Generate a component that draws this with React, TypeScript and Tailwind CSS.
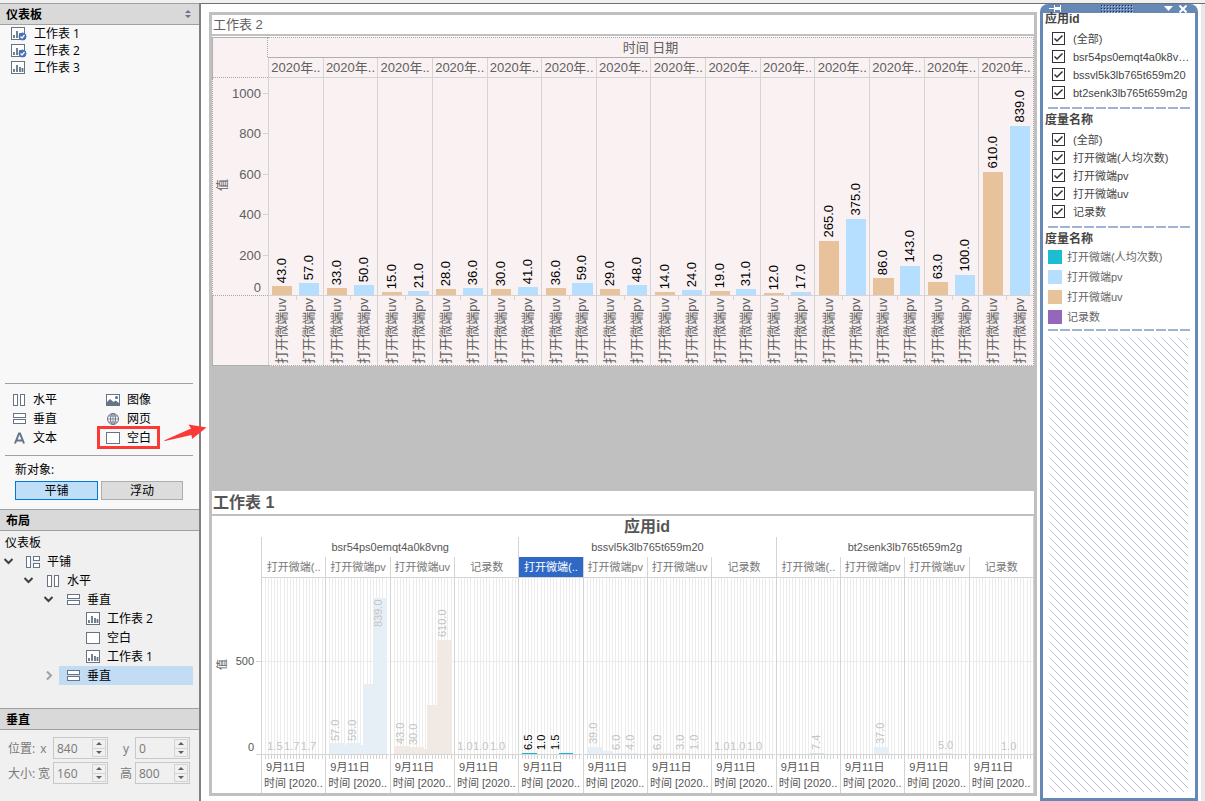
import React from 'react'
import { twMerge } from 'tailwind-merge'

type IconName = 'sheet' | 'sheetUsed' | 'horizontal' | 'vertical' | 'tiled' | 'image' | 'web' | 'text' | 'blank'

const Icon: React.FC<{ name: IconName }> = ({ name }) => (
    <svg width="16" height="14" viewBox="0 0 16 14" fill="none" stroke="#667486" className="shrink-0 overflow-visible" aria-hidden="true">
        {(name === 'sheet' || name === 'sheetUsed') && (
            <>
                <rect x="0.5" y="0.5" width="13" height="12" fill="#fff" />
                <path d="M3 11V8M6 11V4M9 11V6M11.500 11V7" strokeWidth="1.8" />
            </>
        )}
        {name === 'sheetUsed' && (
            <>
                <circle cx="11.500" cy="9.500" r="3.500" fill="#4472b8" stroke="#4472b8" />
                <path d="M9.500 9.500L11 11L13.500 8" stroke="#fff" strokeWidth="1.2" />
            </>
        )}
        {name === 'horizontal' && (
            <>
                <rect x="1.500" y="1.500" width="4" height="11" fill="#fff" />
                <rect x="8.500" y="1.500" width="4" height="11" fill="#fff" />
            </>
        )}
        {name === 'vertical' && (
            <>
                <rect x="1.500" y="1.500" width="12" height="4" fill="#fff" />
                <rect x="1.500" y="7.500" width="12" height="4" fill="#fff" />
            </>
        )}
        {name === 'tiled' && (
            <>
                <rect x="0.500" y="1.500" width="4" height="11" fill="#fff" />
                <rect x="7.500" y="1.500" width="6" height="4" fill="#fff" />
                <rect x="7.500" y="8.500" width="6" height="4" fill="#fff" />
            </>
        )}
        {name === 'image' && (
            <>
                <rect x="0.500" y="1.500" width="13" height="11" fill="#fff" />
                <path d="M1 12.500V9L4 6L7.500 9L9.500 7.500L13 10V12.500Z" fill="#667486" stroke="none" />
                <circle cx="10.500" cy="4.500" r="1.500" fill="#4472b8" stroke="none" />
            </>
        )}
        {name === 'web' && (
            <>
                <circle cx="7" cy="7" r="5.500" fill="#fff" />
                <ellipse cx="7" cy="7" rx="2.500" ry="5.500" />
                <path d="M1.500 7H12.500M2.500 4H11.500M2.500 10H11.500M7 1.500V12.500" strokeWidth="0.8" />
            </>
        )}
        {name === 'text' && <path d="M3 12.500L7 2.500H8L12 12.500M4.500 9.500H10.500" strokeWidth="2" />}
        {name === 'blank' && <rect x="0.500" y="1.500" width="13" height="11" fill="#fff" />}
    </svg>
)

const PanelHeader: React.FC<{ title: string; children?: React.ReactNode }> = ({ title, children }) => (
    <h2 className="flex h-[22px] shrink-0 items-center justify-between border-y border-[#a0a0a0] bg-[#d9d9d9] pr-2 pl-1.5 font-bold">
        {title}
        {children}
    </h2>
)

const worksheets: { label: string; icon: IconName }[] = [
    { label: '工作表 1', icon: 'sheetUsed' },
    { label: '工作表 2', icon: 'sheetUsed' },
    { label: '工作表 3', icon: 'sheet' },
]

const objects: { label: string; icon: IconName; marked?: boolean }[] = [
    { label: '水平', icon: 'horizontal' },
    { label: '图像', icon: 'image' },
    { label: '垂直', icon: 'vertical' },
    { label: '网页', icon: 'web' },
    { label: '文本', icon: 'text' },
    { label: '空白', icon: 'blank', marked: true },
]

const indents = ['pl-[3px]', 'pl-[23px]', 'pl-[43px]', 'pl-[63px]']

const tree: { label: string; icon: IconName; level: number; state?: 'open' | 'closed'; selected?: boolean }[] = [
    { label: '平铺', icon: 'tiled', level: 0, state: 'open' },
    { label: '水平', icon: 'horizontal', level: 1, state: 'open' },
    { label: '垂直', icon: 'vertical', level: 2, state: 'open' },
    { label: '工作表 2', icon: 'sheet', level: 3 },
    { label: '空白', icon: 'blank', level: 3 },
    { label: '工作表 1', icon: 'sheet', level: 3 },
    { label: '垂直', icon: 'vertical', level: 2, state: 'closed', selected: true },
]

const NumberField: React.FC<{ id: string; value: string }> = ({ id, value }) => (
    <div className="flex h-[22px] border border-[#c8c8c8] bg-[#f0f0f0]">
        <input id={id} defaultValue={value} className="w-0 min-w-0 flex-1 bg-transparent pl-[3px] outline-none" />
        <div className="m-px flex w-[14px] flex-col border border-[#d4d4d4]">
            <button type="button" aria-label="增加" className="flex flex-1 items-center justify-center border-b border-[#d4d4d4]">
                <svg width="6" height="3" viewBox="0 0 6 3"><path d="M0 3L3 0L6 3Z" fill="#606060" /></svg>
            </button>
            <button type="button" aria-label="减少" className="flex flex-1 items-center justify-center">
                <svg width="6" height="3" viewBox="0 0 6 3"><path d="M0 0L3 3L6 0Z" fill="#606060" /></svg>
            </button>
        </div>
    </div>
)

const Sidebar: React.FC = () => (
    <aside className="flex w-[201px] shrink-0 flex-col border-r-2 border-[#808080] bg-[#f8f8f8] font-['Open_Sans','Noto_Sans_CJK_SC',sans-serif] text-[12px] leading-[17px] text-black">
        <PanelHeader title="仪表板">
            <svg width="6" height="8" viewBox="0 0 6 8" fill="#667486"><path d="M0 3L3 0L6 3ZM0 5L3 8L6 5Z" /></svg>
        </PanelHeader>
        <ul className="flex-1">
            {worksheets.map((w) => (
                <li key={w.label} className="flex h-[17px] items-center gap-[7px] pl-[11px]">
                    <Icon name={w.icon} />
                    {w.label}
                </li>
            ))}
        </ul>

        <div className="mr-1.5 ml-[5px] border-y border-[#a0a0a0] pt-1.5 pb-2">
            <div className="grid grid-cols-[94px_1fr]">
                {objects.map((o) => (
                    <div key={o.label} className="relative flex">
                        <button type="button" className="flex h-[19px] items-center gap-[5px] pl-[7px]">
                            <Icon name={o.icon} />
                            {o.label}
                        </button>
                        {o.marked && (
                            <>
                                <span className="pointer-events-none absolute -top-0.5 -left-0.5 h-[23px] w-[63px] border-3 border-[#fb3936]" />
                                <svg className="pointer-events-none absolute -top-1.5 left-[65px] z-10" width="44" height="20" viewBox="0 0 44 20" fill="#fb3936">
                                    <path d="M0 18.500L27 6.500L24.500 2.500L42.500 5.500L28 17L27.500 13L1 19Z" />
                                </svg>
                            </>
                        )}
                    </div>
                ))}
            </div>
        </div>

        <div className="px-[15px] pt-[5px] pb-[9px]">
            <div className="mb-[3px]">新对象:</div>
            <div className="flex gap-[3px]">
                <button type="button" className="h-[19px] w-[83px] border border-[#0078d7] bg-[#bfdef7] leading-[17px]">平铺</button>
                <button type="button" className="h-[19px] w-[82px] border border-[#adadad] bg-[#dcdcdc] leading-[17px]">浮动</button>
            </div>
        </div>

        <PanelHeader title="布局" />
        <div className="h-[177px] bg-[#f0f0f0] pt-0.5 leading-[19px]">
            <div className="pl-[5px]">仪表板</div>
            <ul>
                {tree.map((t, i) => (
                    <li key={i} className={twMerge('mr-1.5 flex h-[19px] items-center', indents[t.level])}>
                        <span className="flex w-4 shrink-0 items-center">
                            {t.state === 'open' && (
                                <svg width="11" height="7" viewBox="0 0 11 7" fill="none" stroke="#404040" strokeWidth="2"><path d="M1.500 1L5.500 5L9.500 1" /></svg>
                            )}
                            {t.state === 'closed' && (
                                <svg width="11" height="9" viewBox="0 0 11 9" fill="none" stroke="#a0a0a0" strokeWidth="2"><path d="M4 0.500L8 4.500L4 8.500" /></svg>
                            )}
                        </span>
                        <span className={twMerge('flex h-full flex-1 items-center gap-[5px] pl-[7px]', t.selected && 'bg-[#c2dcf3]')}>
                            <Icon name={t.icon} />
                            {t.label}
                        </span>
                    </li>
                ))}
            </ul>
        </div>

        <PanelHeader title="垂直" />
        <div className="grid grid-cols-[30px_15px_55px_27px_55px] items-center gap-y-[3px] bg-[#f0f0f0] pt-[7px] pb-[17px] pl-2 text-[#787878]">
            <span>位置:</span>
            <label htmlFor="pos-x" className="pr-1 text-center">x</label>
            <NumberField id="pos-x" value="840" />
            <label htmlFor="pos-y" className="ml-3 w-3 text-center">y</label>
            <NumberField id="pos-y" value="0" />
            <span>大小:</span>
            <label htmlFor="size-w">宽</label>
            <NumberField id="size-w" value="160" />
            <label htmlFor="size-h" className="ml-3">高</label>
            <NumberField id="size-h" value="800" />
        </div>
    </aside>
)

// [uv, pv] for each day
const daily = [
    [43, 57], [33, 50], [15, 21], [28, 36], [30, 41], [36, 59], [29, 48],
    [14, 24], [19, 31], [12, 17], [265, 375], [86, 143], [63, 100], [610, 839],
]

const SheetTwo: React.FC = () => (
    <section className="text-[13px] text-[#606060]">
        <h3 className="h-[19px] bg-white pl-px leading-[19px]">工作表 2</h3>
        <div className="mt-0.5 flex border-t border-white bg-[#f9f1f2]">
            <div className="w-14 shrink-0">
                <div className="flex h-[41px] border-b border-dotted border-[#a8a8a8]">
                    <div className="flex-1 border-t border-l border-solid border-[#b0b0b0]" />
                    <div className="h-5 border-r border-dotted border-[#a8a8a8]" />
                </div>
                <svg width="56" height="218" className="block border-b border-l border-dotted border-[#a8a8a8]" fill="#606060">
                    {[1000, 800, 600, 400, 200].map((v) => (
                        <g key={v}>
                            <text x="48" y={222 - v * 0.202} textAnchor="end">{v}</text>
                            <path d={`M50 ${Math.round(217 - v * 0.202)}.5H56`} stroke="#d4d4d4" />
                        </g>
                    ))}
                    <text x="48" y="214" textAnchor="end">0</text>
                    <text transform="translate(14 113) rotate(-90)" fontSize="12">值</text>
                </svg>
                <div className="h-[70px] border-b border-l border-[#b0b0b0]" />
            </div>
            <div className="min-w-0 flex-1 border-t border-r border-b border-dotted border-[#a8a8a8]">
                <div className="h-5 border-b border-[#b0b0b0] text-center leading-[19px] [border-bottom-style:solid]">时间 日期</div>
                <div className="grid grid-cols-14">
                    {daily.map((pair, d) => (
                        <div key={d} className="min-w-0 border-l border-solid border-[#d4d4d4]">
                            <div className="h-5 overflow-hidden border-b border-solid border-[#d4d4d4] text-center leading-[19px] whitespace-nowrap">2020年..</div>
                            <div className="flex h-[218px] border-b border-solid border-[#d4d4d4]">
                                {pair.map((v, i) => (
                                    <div key={i} className="flex flex-1 flex-col items-center justify-end">
                                        <span className="mb-[3px] rotate-180 leading-[18px] text-black [text-orientation:sideways] [writing-mode:vertical-rl]">{v.toFixed(1)}</span>
                                        <div className={twMerge('w-3/4', i === 0 ? 'bg-[#e8c29a]' : 'bg-[#b5deff]')} style={{ height: Math.round(v * 0.202) }} />
                                    </div>
                                ))}
                            </div>
                            <div className="flex h-[69px]">
                                {['uv', 'pv'].map((m, i) => (
                                    <div key={m} className="relative flex flex-1 items-start justify-center overflow-hidden pt-0.5">
                                        {i === 1 && <span className="absolute top-0 left-0 h-1 w-px bg-[#d4d4d4]" />}
                                        <span className="rotate-180 leading-[18px] whitespace-nowrap [text-orientation:sideways] [writing-mode:vertical-rl]">打开微端{m}</span>
                                    </div>
                                ))}
                            </div>
                        </div>
                    ))}
                </div>
            </div>
        </div>
    </section>
)

interface Pane {
    name: string
    fill: string
    bars: number[][] // x, width, height
    labels: [string, number, number][] // text, x, distance of the baseline from the axis
    flat?: boolean
    active?: boolean
}

const PANE_WIDTH = 64
const PLOT_HEIGHT = 177

const groups: { id: string; panes: Pane[] }[] = [
    {
        id: 'bsr54ps0emqt4a0k8vng',
        panes: [
            { name: '打开微端(..', fill: '#d8ecee', bars: [], flat: true, labels: [['1.5', 13, 5], ['1.7', 30, 5], ['1.7', 47, 5]] },
            {
                name: '打开微端pv', fill: '#e7eff6',
                bars: [[3, 15, 11], [18, 2, 9], [20, 15, 11], [35, 2, 9], [37, 10, 70], [47, 15, 156]],
                labels: [['57.0', 9, 14], ['59.0', 26, 14], ['839.0', 53, 128]],
            },
            {
                name: '打开微端uv', fill: '#f1eae4',
                bars: [[3, 15, 8], [18, 15, 7], [33, 3, 5], [36, 10, 49], [46, 15, 114]],
                labels: [['43.0', 9, 11], ['30.0', 22, 10], ['610.0', 52, 118]],
            },
            { name: '记录数', fill: '#eee', bars: [], flat: true, labels: [['1.0', 10, 5], ['1.0', 26, 5], ['1.0', 43, 5]] },
        ],
    },
    {
        id: 'bssvl5k3lb765t659m20',
        panes: [
            { name: '打开微端(..', fill: '#1bb5cb', active: true, bars: [[3, 15, 1], [40, 15, 1]], labels: [['6.5', 9, 5], ['1.0', 22, 5], ['1.5', 36, 5]] },
            { name: '打开微端pv', fill: '#e7eff6', bars: [[3, 15, 7], [18, 10, 3], [28, 27, 1]], labels: [['39.0', 9, 11], ['6.0', 32, 5], ['4.0', 46, 5]] },
            { name: '打开微端uv', fill: '#f1eae4', bars: [[3, 38, 1]], labels: [['6.0', 9, 5], ['3.0', 32, 5], ['1.0', 46, 5]] },
            { name: '记录数', fill: '#eee', bars: [], flat: true, labels: [['1.0', 10, 5], ['1.0', 26, 5], ['1.0', 43, 5]] },
        ],
    },
    {
        id: 'bt2senk3lb765t659m2g',
        panes: [
            { name: '打开微端(..', fill: '#cfe6e8', bars: [[33, 14, 1]], labels: [['7.4', 39, 5]] },
            { name: '打开微端pv', fill: '#e7eff6', bars: [[33, 15, 7], [48, 2, 1]], labels: [['37.0', 39, 11]] },
            { name: '打开微端uv', fill: '#f1eae4', bars: [[34, 15, 1]], flat: true, labels: [['5.0', 41, 6]] },
            { name: '记录数', fill: '#eee', bars: [], flat: true, labels: [['1.0', 39, 5]] },
        ],
    },
]

const pct = (x: number) => `${(x / PANE_WIDTH) * 100}%`

const PanePlot: React.FC<{ pane: Pane }> = ({ pane }) => (
    <svg width="100%" height={PLOT_HEIGHT + 4} className="block">
        <g stroke="#ececec" shapeRendering="crispEdges">
            {Array.from({ length: 19 }, (_, i) => (
                <React.Fragment key={i}>
                    <line x1={`${(i + 1) * 5}%`} x2={`${(i + 1) * 5}%`} y1="0" y2={PLOT_HEIGHT} />
                    <line x1={`${(i + 1) * 5}%`} x2={`${(i + 1) * 5}%`} y1={PLOT_HEIGHT} y2={PLOT_HEIGHT + 4} stroke="#d4d4d4" />
                </React.Fragment>
            ))}
            <line x1="0" x2="100%" y1="83" y2="83" />
        </g>
        {pane.bars.map(([x, w, h]) => (
            <rect key={x} x={pct(x)} width={pct(w)} y={PLOT_HEIGHT - 1 - h} height={h} fill={pane.fill} shapeRendering="crispEdges" />
        ))}
        <line x1="0" x2="100%" y1={PLOT_HEIGHT - 1} y2={PLOT_HEIGHT - 1} stroke="#d4d4d4" shapeRendering="crispEdges" />
        {pane.labels.map(([text, x, up]) => (
            <svg key={x} x={pct(x)} y={PLOT_HEIGHT - up} overflow="visible" fontSize="11" fill={pane.active ? '#000' : '#c4c4c4'}>
                {pane.flat ? <text textAnchor="middle">{text}</text> : <text transform="translate(4 0) rotate(-90)">{text}</text>}
            </svg>
        ))}
    </svg>
)

const SheetOne: React.FC = () => (
    <section className="text-[11px] text-[#555]">
        <h3 className="h-[23px] bg-white pl-px text-[16px] leading-[24px] font-bold">工作表 1</h3>
        <div className="mt-0.5 flex bg-white">
            <svg width="49" height="277" className="shrink-0" fill="#555">
                <text x="42" y="149" textAnchor="end" fontSize="11">500</text>
                <text x="42" y="235" textAnchor="end" fontSize="11">0</text>
                <path d="M44 145.500H49M44 238.500H49" stroke="#d4d4d4" />
                <text transform="translate(14 154) rotate(-90)" fontSize="11">值</text>
            </svg>
            <div className="min-w-0 flex-1 border-r border-[#d4d4d4]">
                <div className="h-[21px] text-center text-[16px] leading-[21px] font-bold">应用id</div>
                <div className="grid grid-cols-3">
                    {groups.map((g) => (
                        <div key={g.id} className="min-w-0">
                            <div className="h-5 border-l border-[#d4d4d4] text-center leading-[20px]">{g.id}</div>
                            <div className="grid grid-cols-4">
                                {g.panes.map((p) => (
                                    <div key={p.name} className="h-[236px] min-w-0 overflow-hidden border-l border-[#d4d4d4] whitespace-nowrap">
                                        <div className={twMerge('h-[21px] border-b border-[#d4d4d4] text-center leading-[20px] text-[#777]', p.active && 'bg-[#2f69c5] text-white')}>
                                            {p.name}
                                        </div>
                                        <PanePlot pane={p} />
                                        <div className="pl-1 leading-[16px]">9月11日</div>
                                        <div className="pl-0.5 leading-[16px]">时间 [2020..</div>
                                    </div>
                                ))}
                            </div>
                        </div>
                    ))}
                </div>
            </div>
        </div>
    </section>
)

const Check: React.FC<{ label: string }> = ({ label }) => (
    <label className="flex h-[18px] gap-2 pt-0.5 pl-[9px] leading-[14px] whitespace-nowrap">
        <span className="grid size-[13px] shrink-0">
            <input type="checkbox" defaultChecked className="peer size-[13px] appearance-none border border-[#333] bg-white [grid-area:1/1]" />
            <svg viewBox="0 0 13 13" fill="none" stroke="#333" strokeWidth="1.5" className="pointer-events-none invisible size-[13px] [grid-area:1/1] peer-checked:visible">
                <path d="M2.500 6.500L5 9L10.500 3.500" />
            </svg>
        </span>
        {label}
    </label>
)

const Divider: React.FC = () => (
    <div className="mx-[5px] h-0.5 shrink-0 bg-[repeating-linear-gradient(90deg,#9fb3d6_0_10px,transparent_10px_12px)]" />
)

const legend = [
    { label: '打开微端(人均次数)', color: 'bg-[#1bbdd0]' },
    { label: '打开微端pv', color: 'bg-[#b5deff]' },
    { label: '打开微端uv', color: 'bg-[#e8c29a]' },
    { label: '记录数', color: 'bg-[#9467bd]' },
]

const FilterPanel: React.FC = () => (
    <aside className="flex w-[158px] shrink-0 flex-col rounded-t-lg border-x-3 border-b-3 border-[#6688b7] bg-[#6688b7] text-[11px] text-[#444]">
        <div className="flex h-[9px] items-center pr-1.5 pl-1.5 text-white">
            <svg width="12" height="9" viewBox="0 0 12 9" fill="currentColor" shapeRendering="crispEdges">
                <path d="M0 4H5V1H6V3H11V1H12V8H11V6H6V8H5V5H0Z" />
            </svg>
            <svg width="33" height="8" className="ml-10" shapeRendering="crispEdges">
                <defs>
                    <pattern id="grip" width="3" height="3" patternUnits="userSpaceOnUse">
                        <rect width="1" height="1" fill="#1e2f4d" />
                        <rect x="1" y="1" width="1" height="1" fill="#b9c9e2" />
                    </pattern>
                </defs>
                <rect width="33" height="8" fill="url(#grip)" />
            </svg>
            <button type="button" aria-label="菜单" className="mr-1.5 ml-auto">
                <svg width="9" height="5" viewBox="0 0 9 5" fill="currentColor"><path d="M0 0H9L4.500 5Z" /></svg>
            </button>
            <button type="button" aria-label="关闭" className="mr-0.5">
                <svg width="8" height="8" viewBox="0 0 8 8" stroke="currentColor" strokeWidth="2"><path d="M0.500 0.500L7.500 7.500M7.500 0.500L0.500 7.500" /></svg>
            </button>
        </div>
        <div className="flex flex-1 flex-col bg-white">
            <fieldset className="pb-[5px]">
                <legend className="mb-[5px] pl-0.5 text-[12px] leading-[12px] font-bold">应用id</legend>
                <Check label="(全部)" />
                <Check label="bsr54ps0emqt4a0k8v…" />
                <Check label="bssvl5k3lb765t659m20" />
                <Check label="bt2senk3lb765t659m2g" />
            </fieldset>
            <Divider />
            <fieldset className="pb-[5px]">
                <legend className="pl-0.5 text-[12px] leading-[22px] font-bold">度量名称</legend>
                <Check label="(全部)" />
                <Check label="打开微端(人均次数)" />
                <Check label="打开微端pv" />
                <Check label="打开微端uv" />
                <Check label="记录数" />
            </fieldset>
            <Divider />
            <h4 className="h-[19px] pl-0.5 text-[12px] leading-[22px] font-bold">度量名称</h4>
            <ul className="pb-0.5 text-[#666]">
                {legend.map((l) => (
                    <li key={l.label} className="flex h-5 items-center gap-[5px] pl-[5px]">
                        <span className={twMerge('size-[14px]', l.color)} />
                        {l.label}
                    </li>
                ))}
            </ul>
            <Divider />
            <div className="mx-[7px] mt-[7px] mb-1.5 flex flex-1">
                <svg className="h-auto w-full" shapeRendering="crispEdges">
                    <defs>
                        <pattern id="hatch" width="8" height="8" patternUnits="userSpaceOnUse">
                            <path d="M0 0L8 8" stroke="#b4c0da" strokeWidth="1" />
                        </pattern>
                    </defs>
                    <rect width="100%" height="100%" fill="url(#hatch)" />
                </svg>
            </div>
        </div>
    </aside>
)

export default function App() {
    return (
        <div className="flex min-h-screen flex-col bg-white font-['Liberation_Sans','Noto_Sans_CJK_SC',sans-serif]">
            <div className="h-[3px] shrink-0 bg-[#f0f0f0]" />
            <div className="flex flex-1">
                <Sidebar />
                <div className="flex min-w-0 flex-1 border-t border-[#707070]">
                    <main className="mx-[3px] mt-2 mb-[5px] ml-2 flex min-w-0 flex-1 flex-col justify-between border-3 border-[#c0c0c0] bg-[#c0c0c0]">
                        <SheetTwo />
                        <SheetOne />
                    </main>
                    <FilterPanel />
                    <div className="ml-[3px] w-1 shrink-0 bg-[#e8e8e8]" />
                </div>
            </div>
        </div>
    )
}
